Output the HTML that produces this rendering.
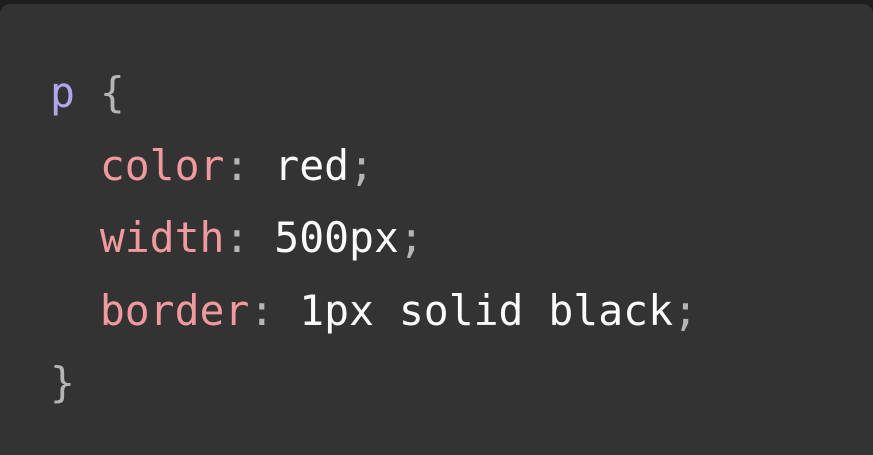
<!DOCTYPE html>
<html><head><style>
html,body{margin:0;padding:0;}
body{width:873px;height:455px;background:#1e1e1e;overflow:hidden;position:relative;}
.box{position:absolute;left:0;top:4px;width:873px;height:451px;background:#333333;border-radius:10px 10px 0 0;}
pre{position:absolute;left:50px;top:57px;margin:0;font-family:"DejaVu Sans Mono","Liberation Mono",monospace;font-size:41.4px;line-height:72.5px;color:#fafafa;}
.s{color:#b3a4ec}.p{color:#b5b5b5}.k{color:#f0999e}
</style></head><body><div class="box"></div>
<pre><span class="s">p</span> <span class="p">{</span>
  <span class="k">color</span><span class="p">:</span> red<span class="p">;</span>
  <span class="k">width</span><span class="p">:</span> 500px<span class="p">;</span>
  <span class="k">border</span><span class="p">:</span> 1px solid black<span class="p">;</span>
<span class="p">}</span></pre>
</body></html>
